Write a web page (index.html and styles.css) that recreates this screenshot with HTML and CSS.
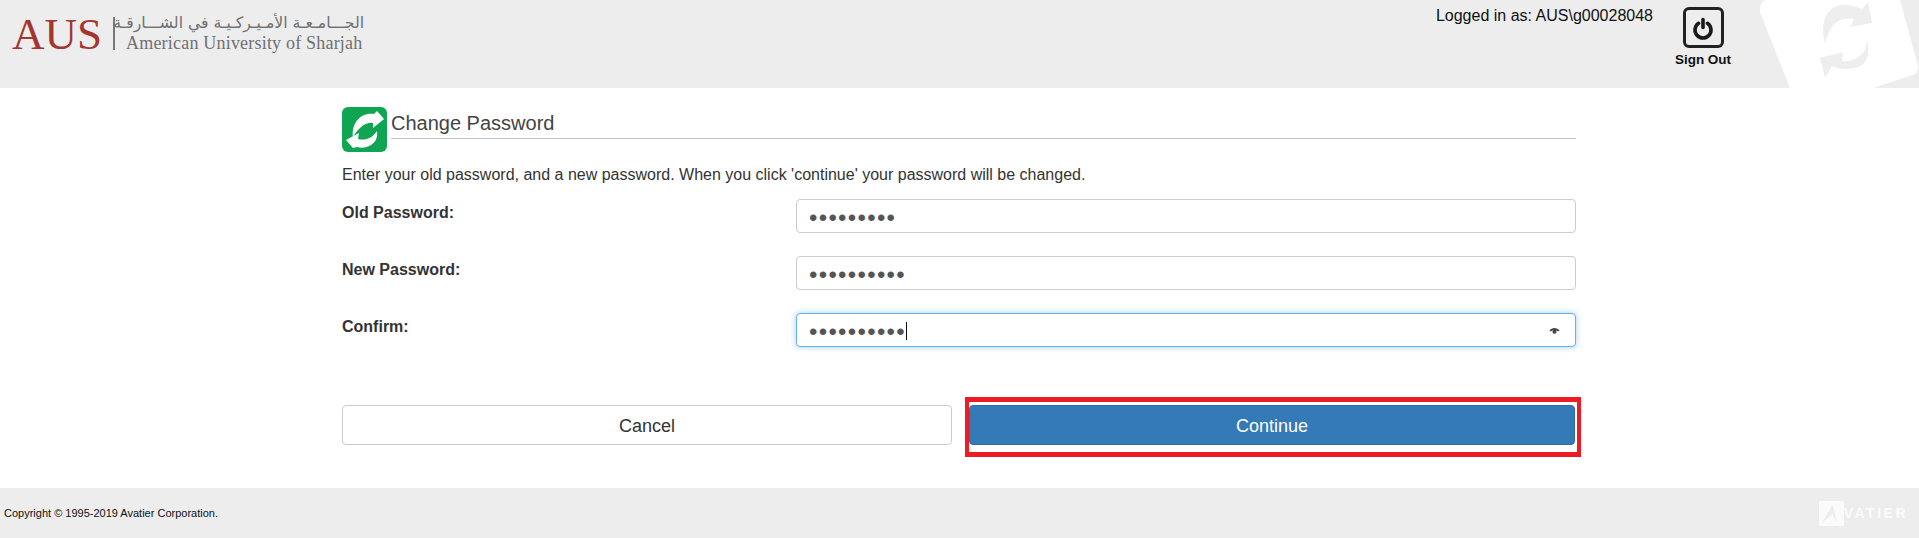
FILE: index.html
```html
<!DOCTYPE html>
<html lang="en">
<head>
<meta charset="utf-8">
<title>Change Password</title>
<link rel="stylesheet" href="styles.css">
</head>
<body>
<header class="top">
  <div class="brand">
    <span class="brand-mark">AUS</span>
    <span class="brand-rule"></span>
    <div class="brand-names">
      <span class="brand-ar" lang="ar" dir="rtl">الجـــامـعـة الأمـيـركـيـة في الشـــارقـة</span>
      <span class="brand-en">American University of Sharjah</span>
    </div>
  </div>
  <div class="user">
    <span class="logged">Logged in as: AUS\g00028048</span>
    <a class="signout">
      <span class="power">
        <svg viewBox="0 0 24 24" width="24" height="24"><path d="M7.600 7.300a8 8 0 1 0 8.800 0" fill="none" stroke="#1a1a1a" stroke-width="3.600" stroke-linecap="round"/><path d="M12 3.500v8" fill="none" stroke="#1a1a1a" stroke-width="3.600" stroke-linecap="round"/></svg>
      </span>
      <span class="signout-label">Sign Out</span>
    </a>
  </div>
  <svg class="deco" viewBox="0 0 169 88" width="169" height="88">
    <path d="M15 0H150L168 66Q169 72 163 75L123 88H40L10 12Q9 4 15 0Z" fill="#fff"/>
    <g fill="#eeeeee">
      <path d="M75 43C70 25 75 8 90 5C95 4 105 6 112 9L118 2L122 23L100 27L104 19C95 17 85 20 80 30Z"/>
      <path d="M117 40C121 55 116 68 103 68C98 70 88 69 82 66L75 78L70 58L93 52L92 61C100 62 110 58 115 50Z"/>
    </g>
  </svg>
</header>
<main class="content">
  <div class="title-row">
    <span class="title-icon">
      <svg viewBox="0 0 45 45" width="45" height="45">
        <rect width="45" height="45" rx="6" fill="#10a552"/>
        <path d="M11 30C9 16 19 5 32 7L35 4L42 12L31 21L31 16C24 15 17 20 11 30Z" fill="#fff"/>
        <path d="M35 24C37 35 27 43 15 40L11 41L4 33L17 26L16 32C24 34 30 31 35 24Z" fill="#fff"/>
      </svg>
    </span>
    <h1 class="title">Change Password</h1>
  </div>
  <p class="intro">Enter your old password, and a new password. When you click 'continue' your password will be changed.</p>
  <form class="fields">
    <label class="field-label" for="old">Old Password:</label>
    <input class="field-input" id="old" type="password" value="123456789">
    <label class="field-label" for="new">New Password:</label>
    <input class="field-input" id="new" type="password" value="1234567890">
    <label class="field-label" for="confirm">Confirm:</label>
    <div class="field-wrap">
      <input class="field-input focused" id="confirm" type="password" value="1234567890">
      <span class="caret"></span>
      <svg class="eye" viewBox="0 0 14 10" width="11" height="8"><path d="M0.500 4.500C4 0 10 0 13.500 4.500L11.500 5.500C9.500 3.500 4.500 3.500 2.500 5.500Z" fill="#444"/><circle cx="7" cy="6" r="2.600" fill="#444"/></svg>
    </div>
  </form>
  <div class="actions">
    <button class="btn btn-cancel" type="button">Cancel</button>
    <div class="highlight"><button class="btn btn-continue" type="button">Continue</button></div>
  </div>
</main>
<footer class="bottom">
  <span class="copy">Copyright © 1995-2019 Avatier Corporation.</span>
  <span class="avatier">
    <svg viewBox="0 0 26 26" width="25" height="25"><rect width="26" height="26" rx="1" fill="#fbfbfb"/><path d="M3 23L14 4L19 23L14 14Z" fill="#ededed"/></svg>
    <span class="avatier-name">VATIER</span>
  </span>
</footer>
</body>
</html>
```
FILE: styles.css
```css
* { box-sizing: border-box; }
html, body { margin: 0; padding: 0; }
body {
  height: 538px;
  overflow: hidden;
  display: flex;
  flex-direction: column;
  background: #fff;
  color: #333;
  font-family: "Liberation Sans", Arial, sans-serif;
}
.top {
  position: relative;
  height: 88px;
  flex: none;
  background: #ededed;
  display: flex;
  justify-content: space-between;
  overflow: hidden;
}
.brand {
  display: flex;
  align-items: flex-start;
  padding: 8px 0 0 12px;
}
.brand-mark {
  font-family: "Liberation Serif", serif;
  font-size: 45px;
  line-height: 52px;
  color: #a5352f;
}
.brand-rule {
  width: 2px;
  height: 33px;
  margin: 9px 11px 0 11px;
  background: #777;
}
.brand-names {
  display: flex;
  flex-direction: column;
  width: 238px;
  padding-top: 3px;
  color: #707070;
}
.brand-ar {
  font-family: "DejaVu Sans", sans-serif;
  font-size: 15.700px;
  line-height: 24px;
  white-space: nowrap;
  text-align: right;
}
.brand-en {
  font-family: "Liberation Serif", serif;
  font-size: 18px;
  line-height: 20px;
  margin-top: -2px;
  letter-spacing: 0.200px;
  white-space: nowrap;
}
.user {
  display: flex;
  align-items: flex-start;
  padding: 7px 188px 0 0;
  color: #111;
  position: relative;
  z-index: 1;
}
.logged { font-size: 16px; line-height: 18px; margin-right: 22px; }
.signout {
  display: flex;
  flex-direction: column;
  align-items: center;
  width: 56px;
}
.power {
  width: 41px;
  height: 41px;
  border: 3px solid #222;
  border-radius: 6px;
  display: flex;
  align-items: center;
  justify-content: center;
}
.signout-label {
  font-size: 13.500px;
  font-weight: 700;
  line-height: 16px;
  margin-top: 4px;
  white-space: nowrap;
}
.deco { position: absolute; top: 0; right: 0; }
.content {
  flex: 1;
  padding: 19px 343px 0 342px;
}
.title-row { display: flex; align-items: flex-start; height: 45px; }
.title-icon { width: 45px; height: 45px; flex: none; margin-right: 4px; }
.title-icon svg { display: block; }
.title {
  flex: 1;
  margin: 0;
  height: 32px;
  border-bottom: 1px solid #c4c4c4;
  color: #444;
  font-size: 20px;
  font-weight: 400;
  line-height: 32px;
}
.intro {
  margin: 13px 0 0;
  font-size: 16px;
  line-height: 20px;
}
.fields {
  display: grid;
  grid-template-columns: 454px 1fr;
  row-gap: 23px;
  margin-top: 14px;
}
.field-label {
  font-size: 16px;
  font-weight: 700;
  line-height: 18px;
  padding-top: 5px;
}
.field-wrap { position: relative; }
.field-input {
  display: block;
  width: 100%;
  height: 34px;
  padding: 3px 12px 0;
  border: 1px solid #ccc;
  border-radius: 4px;
  background: #fff;
  color: #555;
  font-family: "Liberation Sans", sans-serif;
  font-size: 24px;
  letter-spacing: 1.300px;
  outline: none;
}
.focused {
  border-color: #66afe9;
  box-shadow: 0 0 6px rgba(102, 175, 233, 0.6);
}
.caret {
  position: absolute;
  left: 110px;
  top: 9px;
  width: 1px;
  height: 18px;
  background: #111;
}
.eye { position: absolute; right: 16px; top: 14px; }
.actions {
  display: grid;
  grid-template-columns: 610px 616px;
  column-gap: 13px;
  margin-top: 58px;
  align-items: start;
}
.btn {
  display: block;
  width: 100%;
  height: 40px;
  padding: 2px 0 0;
  border-radius: 4px;
  font-family: inherit;
  font-size: 18px;
}
.btn-cancel {
  border: 1px solid #ccc;
  background: #fff;
  color: #333;
}
.highlight {
  margin-top: -8px;
  padding: 3px 2px 7px 0;
  border: solid #ed1c24;
  border-width: 5px 4px;
  background: #fff;
}
.btn-continue {
  border: 1px solid #2e6da4;
  background: #337ab7;
  color: #fff;
}
.bottom {
  height: 50px;
  flex: none;
  background: #ededed;
  display: flex;
  align-items: center;
  justify-content: space-between;
  padding: 0 11px 0 4px;
}
.copy { font-size: 11px; color: #111; }
.avatier { display: flex; align-items: center; color: #fbfbfb; }
.avatier-name { font-size: 14px; font-weight: 700; letter-spacing: 2.500px; }
```
